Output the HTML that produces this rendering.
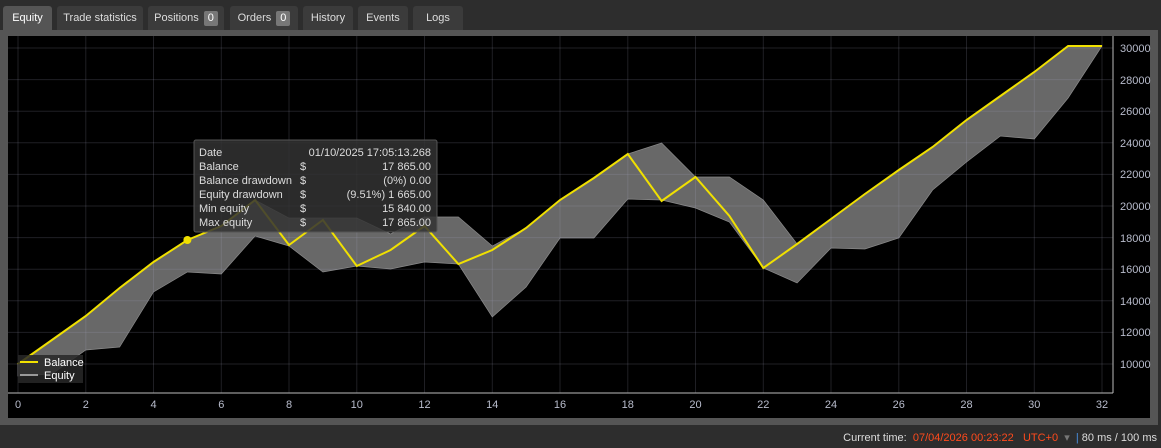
<!DOCTYPE html>
<html><head><meta charset="utf-8"><style>
body{margin:0;width:1161px;height:448px;background:#2d2d2d;font-family:"Liberation Sans",sans-serif;overflow:hidden;position:relative}
.tab{position:absolute;top:6px;height:24px;background:#3b3b3b;color:#ddd;font-size:11px;line-height:25px;text-align:center;border-radius:3px 3px 0 0}
.tab.a{background:#555;color:#fff;height:25px}
.b{display:inline-block;background:#777;color:#fff;border-radius:2px;padding:0 4px;line-height:15px;font-size:11px;margin-left:5px}
#frame{position:absolute;left:0;top:30px;width:1158px;height:395px;background:#555}
#plot{position:absolute;left:8px;top:6px;width:1142px;height:382px;background:#000}
svg text{font-family:"Liberation Sans",sans-serif}
#status{position:absolute;top:431px;right:4px;font-size:11px;color:#ddd;white-space:pre}
</style></head><body>
<div class="tab a" style="left:3px;width:49px">Equity</div>
<div class="tab" style="left:57px;width:86px">Trade statistics</div>
<div class="tab" style="left:148px;width:76px">Positions<span class="b">0</span></div>
<div class="tab" style="left:230px;width:68px">Orders<span class="b">0</span></div>
<div class="tab" style="left:303px;width:50px">History</div>
<div class="tab" style="left:358px;width:50px">Events</div>
<div class="tab" style="left:413px;width:50px">Logs</div>
<div id="frame"><div id="plot"></div></div>
<svg width="1161" height="448" style="position:absolute;left:0;top:0">
<polygon fill="#686868" stroke="#8a8a8a" stroke-width="0.7" points="18,364 51.9,340 85.8,316 119.6,288 153.5,262 187.4,240 221.3,226 255.1,200 289,218 322.9,218 356.8,218 390.6,234 424.5,217 458.4,217 492.3,246 526.1,228 560,200 593.9,178 627.8,154 661.6,143 695.5,177 729.4,177 763.3,200 797.1,244 831,219 864.9,194 898.8,170 932.6,147 966.5,120 1000.4,96 1034.3,72 1068.1,46 1102,46 1068.1,98 1034.3,139 1000.4,136 966.5,162 932.6,190 898.8,238 864.9,249 831,248 797.1,283 763.3,268 729.4,222 695.5,208 661.6,200 627.8,199 593.9,238 560,238 526.1,287 492.3,317 458.4,264 424.5,262 390.6,269 356.8,266 322.9,272 289,246 255.1,236 221.3,274 187.4,272 153.5,292 119.6,347 85.8,350 51.9,374 18,376"/>
<g stroke="rgba(170,170,200,0.18)" stroke-width="1">
<line x1="8" x2="1113" y1="364" y2="364"/><line x1="8" x2="1113" y1="332.4" y2="332.4"/><line x1="8" x2="1113" y1="300.8" y2="300.8"/><line x1="8" x2="1113" y1="269.2" y2="269.2"/><line x1="8" x2="1113" y1="237.6" y2="237.6"/><line x1="8" x2="1113" y1="206" y2="206"/><line x1="8" x2="1113" y1="174.4" y2="174.4"/><line x1="8" x2="1113" y1="142.8" y2="142.8"/><line x1="8" x2="1113" y1="111.2" y2="111.2"/><line x1="8" x2="1113" y1="79.6" y2="79.6"/><line x1="8" x2="1113" y1="48" y2="48"/>
<line y1="36" y2="393" x1="18" x2="18"/><line y1="36" y2="393" x1="85.8" x2="85.8"/><line y1="36" y2="393" x1="153.5" x2="153.5"/><line y1="36" y2="393" x1="221.3" x2="221.3"/><line y1="36" y2="393" x1="289" x2="289"/><line y1="36" y2="393" x1="356.8" x2="356.8"/><line y1="36" y2="393" x1="424.5" x2="424.5"/><line y1="36" y2="393" x1="492.3" x2="492.3"/><line y1="36" y2="393" x1="560" x2="560"/><line y1="36" y2="393" x1="627.8" x2="627.8"/><line y1="36" y2="393" x1="695.5" x2="695.5"/><line y1="36" y2="393" x1="763.3" x2="763.3"/><line y1="36" y2="393" x1="831" x2="831"/><line y1="36" y2="393" x1="898.8" x2="898.8"/><line y1="36" y2="393" x1="966.5" x2="966.5"/><line y1="36" y2="393" x1="1034.3" x2="1034.3"/><line y1="36" y2="393" x1="1102" x2="1102"/>
</g>
<polyline fill="none" stroke="#f0e000" stroke-width="2" points="18,364 51.9,340 85.8,316 119.6,288 153.5,262 187.4,240 221.3,226 255.1,200 289,245 322.9,220 356.8,266 390.6,250 424.5,226 458.4,264 492.3,250 526.1,228 560,200 593.9,178 627.8,154 661.6,201 695.5,177 729.4,216 763.3,268 797.1,244 831,219 864.9,194 898.8,170 932.6,147 966.5,120 1000.4,96 1034.3,72 1068.1,46 1102,46"/>
<circle cx="187.4" cy="240" r="4" fill="#f0e000"/>
<line x1="8" x2="1113" y1="393" y2="393" stroke="#bbb"/>
<line x1="1113" x2="1113" y1="36" y2="393" stroke="#bbb"/>
<g fill="#b8bccc" font-size="11">
<text x="1120" y="368">10000</text><text x="1120" y="336">12000</text><text x="1120" y="305">14000</text><text x="1120" y="273">16000</text><text x="1120" y="242">18000</text><text x="1120" y="210">20000</text><text x="1120" y="178">22000</text><text x="1120" y="147">24000</text><text x="1120" y="115">26000</text><text x="1120" y="84">28000</text><text x="1120" y="52">30000</text>
</g>
<g fill="#b8bccc" font-size="11" text-anchor="middle">
<text x="18" y="408">0</text><text x="85.8" y="408">2</text><text x="153.5" y="408">4</text><text x="221.3" y="408">6</text><text x="289" y="408">8</text><text x="356.8" y="408">10</text><text x="424.5" y="408">12</text><text x="492.3" y="408">14</text><text x="560" y="408">16</text><text x="627.8" y="408">18</text><text x="695.5" y="408">20</text><text x="763.3" y="408">22</text><text x="831" y="408">24</text><text x="898.8" y="408">26</text><text x="966.5" y="408">28</text><text x="1034.3" y="408">30</text><text x="1102" y="408">32</text>
</g>
<rect x="18" y="355" width="65" height="28" fill="rgba(40,40,40,0.85)"/>
<line x1="20" x2="38" y1="362" y2="362" stroke="#f0e000" stroke-width="2"/>
<line x1="20" x2="38" y1="375" y2="375" stroke="#999" stroke-width="2"/>
<text x="44" y="366" fill="#fff" font-size="11">Balance</text>
<text x="44" y="379" fill="#fff" font-size="11">Equity</text>
<rect x="194" y="140" width="243" height="92" rx="2" fill="rgba(50,50,50,0.85)" stroke="#555"/>
<g fill="#ddd" font-size="11">
<text x="199" y="156">Date</text><text x="199" y="170">Balance</text><text x="199" y="184">Balance drawdown</text><text x="199" y="198">Equity drawdown</text><text x="199" y="212">Min equity</text><text x="199" y="226">Max equity</text>
<text x="300" y="170">$</text><text x="300" y="184">$</text><text x="300" y="198">$</text><text x="300" y="212">$</text><text x="300" y="226">$</text>
<g text-anchor="end"><text x="431" y="156">01/10/2025 17:05:13.268</text><text x="431" y="170">17 865.00</text><text x="431" y="184">(0%)  0.00</text><text x="431" y="198">(9.51%)  1 665.00</text><text x="431" y="212">15 840.00</text><text x="431" y="226">17 865.00</text></g>
</g>
</svg>
<div id="status">Current time:  <span style="color:#ff4a1c">07/04/2026 00:23:22   UTC+0</span>  <span style="color:#777">▾</span>  <span style="color:#4a90e2">|</span> 80 ms / 100 ms</div>
</body></html>
